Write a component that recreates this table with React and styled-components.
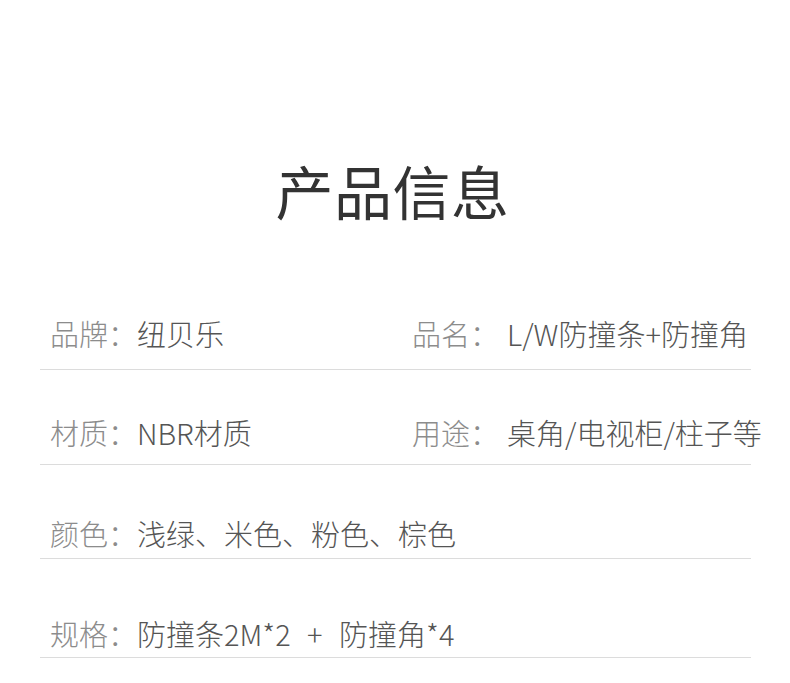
import styled, { createGlobalStyle } from "styled-components";

const GlobalStyle = createGlobalStyle`
	body {
		margin: 0;
		background: #fff;
		font-family: "Noto Sans CJK SC", "Noto Sans", sans-serif;
	}
`;

// pt = space above the text, h = row height down to its rule
const rows = [
	{
		pt: 37,
		h: 94,
		cells: [
			{ label: "品牌：", value: "纽贝乐" },
			{ label: "品名：", value: "L/W防撞条+防撞角" },
		],
	},
	{
		pt: 42,
		h: 95,
		cells: [
			{ label: "材质：", value: "NBR材质" },
			{ label: "用途：", value: "桌角/电视柜/柱子等" },
		],
	},
	{ pt: 48, h: 94, cells: [{ label: "颜色：", value: "浅绿、米色、粉色、棕色" }] },
	{ pt: 54, h: 99, cells: [{ label: "规格：", value: "防撞条2M*2 + 防撞角*4" }] },
];

export default function App() {
	return (
		<Page>
			<GlobalStyle />
			<Title>产品信息</Title>
			<Table>
				{rows.map((row, i) => (
					<Row key={i} $pt={row.pt} $h={row.h}>
						{row.cells.map((cell, j) => (
							<Cell key={j} $right={j === 1}>
								<Label $right={j === 1}>{cell.label}</Label>
								<Value>{cell.value}</Value>
							</Cell>
						))}
					</Row>
				))}
			</Table>
		</Page>
	);
}

const Page = styled.div`
	width: 790px;
	height: 683px;
	overflow: hidden;
	padding-top: 148px;
	box-sizing: border-box;
`;

const Title = styled.h1`
	margin: 0;
	padding-right: 5px;
	text-align: center;
	font-size: 58px;
	font-weight: 400;
	line-height: 84px;
	color: #333;
	letter-spacing: 0.5px;
`;

const Table = styled.div`
	margin: 44px 0 0 40px;
	width: 711px;
`;

const Row = styled.div`
	display: flex;
	align-items: flex-start;
	height: ${(p) => p.$h}px;
	padding-top: ${(p) => p.$pt}px;
	box-sizing: border-box;
	border-bottom: 1px solid #dcdcdc;
`;

const Cell = styled.div`
	display: flex;
	flex-shrink: 0;
	align-items: baseline;
	width: ${(p) => (p.$right ? "auto" : "372px")};
	padding-left: ${(p) => (p.$right ? "0" : "10px")};
	box-sizing: border-box;
	white-space: nowrap;
	font-size: 29px;
	line-height: 40px;
	word-spacing: 10px;
`;

const Label = styled.span`
	color: #8c8c8c;
	font-weight: 300;
	width: ${(p) => (p.$right ? "95px" : "87px")};
`;

const Value = styled.span`
	color: #555;
	font-weight: 300;
`;
